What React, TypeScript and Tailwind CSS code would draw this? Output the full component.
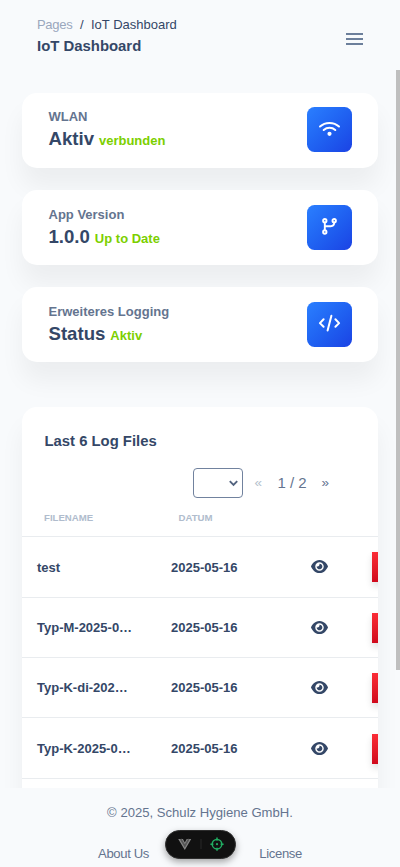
import type { ReactNode } from "react";
import { FaEye } from "react-icons/fa6";

const WifiIcon = () => (
  <svg width="23" height="23" viewBox="0 0 23 23" fill="none" stroke="white" strokeWidth="2" strokeLinecap="round">
    <path d="M2 8.5C7.2 3.7 15.8 3.7 21 8.5M5.7 12C9 9.1 14 9.1 17.3 12" />
    <circle cx="11.5" cy="15.8" r="2.1" fill="white" stroke="none" />
  </svg>
);

const BranchIcon = () => (
  <svg width="23" height="23" viewBox="0 0 23 23" fill="none" stroke="white" strokeWidth="1.9" strokeLinecap="round">
    <circle cx="6.8" cy="5.7" r="1.7" />
    <circle cx="6.8" cy="17" r="1.7" />
    <circle cx="16.2" cy="5.7" r="1.7" />
    <path d="M6.8 7.6v7.4M6.8 12.1c0-.7.6-.9 1.4-.9h4.5c2.2 0 3.5-1.2 3.5-3.6" />
  </svg>
);

const CodeIcon = () => (
  <svg width="23" height="23" viewBox="0 0 23 23" fill="none" stroke="white" strokeWidth="2" strokeLinecap="round" strokeLinejoin="round">
    <path d="M5.6 7.3 1.9 11.1l3.7 3.7M17.4 7.3l3.7 3.8-3.7 3.7M13.4 3.8 9.6 18.5" />
  </svg>
);

function StatCard({ label, value, note, icon }: { label: string; value: string; note: string; icon: ReactNode }) {
  return (
    <section className="flex h-[75px] items-start justify-between rounded-[15px] bg-white pt-[14.8px] pr-[26px] pl-[26.5px] shadow-[0_19px_25px_rgba(0,0,0,0.05)]">
      <div>
        <p className="text-[13px] leading-[20px] font-bold text-[#64748f]">{label}</p>
        <p className="text-[18.6px] leading-[24px] font-bold">
          {value}
          <span className="ml-[5px] text-[13px] text-[#7ccf00]">{note}</span>
        </p>
      </div>
      <div className="flex size-[45px] items-center justify-center rounded-[7.5px] bg-linear-to-br from-[#2b7fff] to-[#1c42e4] pb-[1px]">
        {icon}
      </div>
    </section>
  );
}

const files = ["test", "Typ-M-2025-0…", "Typ-K-di-202…", "Typ-K-2025-0…"];

export default function App() {
  return (
    <div className="relative flex h-[867px] w-[400px] flex-col overflow-hidden bg-[#f8fafc] font-['Liberation_Sans',Arial,sans-serif] text-[#344767]">
      <header className="flex h-[92.5px] shrink-0 items-start justify-between pt-[15px] pr-[37px] pl-[37px]">
        <div>
          <nav className="flex text-[13px] leading-[20px]">
            <span className="w-[43px] tracking-[-0.3px] text-[#9aa7bd]">Pages</span>
            <span className="w-[11px]">/</span>
            <span>IoT Dashboard</span>
          </nav>
          <h1 className="text-[14.9px] leading-[22px] font-bold">IoT Dashboard</h1>
        </div>
        <button aria-label="Menu" className="mt-[18px] flex w-[17px] flex-col gap-[3px]">
          <span className="h-[2px] bg-[#6c7f9b]" />
          <span className="h-[2px] bg-[#6c7f9b]" />
          <span className="h-[2px] bg-[#6c7f9b]" />
        </button>
      </header>

      <main className="flex h-[695.5px] shrink-0 flex-col overflow-hidden px-[22px]">
        <div className="flex shrink-0 flex-col gap-[22.3px]">
          <StatCard label="WLAN" value="Aktiv" note="verbunden" icon={<WifiIcon />} />
          <StatCard label="App Version" value="1.0.0" note="Up to Date" icon={<BranchIcon />} />
          <StatCard label="Erweiteres Logging" value="Status" note="Aktiv" icon={<CodeIcon />} />
        </div>

        <section className="mt-[44.5px] h-[500px] shrink-0 overflow-hidden rounded-[15px] bg-white shadow-[0_19px_25px_rgba(0,0,0,0.05)]">
          <h2 className="pt-[23.4px] pl-[22.5px] text-[14.85px] leading-[22px] font-bold">Last 6 Log Files</h2>
          <div className="mt-[16.1px] flex h-[30px] items-center pl-[170.5px] text-[15px] text-[#64748f]">
            <div className="flex h-[30px] w-[50.5px] shrink-0 items-center justify-end rounded-[4px] border border-[#71829e] pr-[4px]">
              <svg width="9" height="7" viewBox="0 0 9 7" fill="none" stroke="#52637f" strokeWidth="1.9">
                <path d="M.8 1.2 4.5 4.9 8.2 1.2" />
              </svg>
            </div>
            <span className="ml-[11.5px] w-[23px] text-[13.5px] text-[#b5bfcd]">«</span>
            <span className="w-[44px]">1 / 2</span>
            <span className="text-[13.5px]">»</span>
          </div>
          <div className="flex h-[39.2px] items-center border-b border-[#e9ecef] pt-[2px] text-[9.65px] font-bold text-[#b0bccd]">
            <span className="w-[134px] pl-[22px]">FILENAME</span>
            <span className="pl-[22.5px]">DATUM</span>
          </div>
          {files.map((name) => (
            <div key={name} className="flex h-[60.4px] items-center border-b border-[#e9ecef] pt-[1px] text-[13px] font-bold">
              <span className="w-[134px] shrink-0 pl-[15px]">{name}</span>
              <span className="w-[140.5px] shrink-0 pl-[15px]">2025-05-16</span>
              <FaEye size={17} className="mb-[1px] ml-[14.5px] shrink-0" />
              <span className="ml-[44px] h-[30px] w-[60px] shrink-0 bg-linear-to-b from-[#fb2c36] to-[#d0091c] shadow-[0_4px_7px_rgba(0,0,0,0.12)]" />
            </div>
          ))}
        </section>
      </main>

      <footer className="flex-1 pt-[15px] text-[13.1px] text-[#64748f]">
        <p className="text-center leading-[20px]">© 2025, Schulz Hygiene GmbH.</p>
        <div className="mt-[21px] flex justify-between pr-[98px] pl-[98px] leading-[20px] tracking-[-0.35px]">
          <span>About Us</span>
          <span>License</span>
        </div>
      </footer>

      <div className="absolute top-[830px] left-[164.5px] flex h-[28.5px] w-[71px] items-center justify-center rounded-full border border-[#2c2c2c] bg-[#111] shadow-[0_3px_7px_rgba(0,0,0,0.35)]">
        <svg width="69" height="26" viewBox="0 0 69 26" fill="none">
          <path d="M12.2 8h4.7l1.9 3.5L20.7 8h4.5L18.8 19Z" fill="#868686" />
          <path d="m14.7 8 4.1 7 4-7" stroke="#555" strokeWidth="1.7" />
          <path d="M35 8v10" stroke="#292929" />
          <g stroke="#21ad62" strokeWidth="1.5">
            <circle cx="51" cy="13.2" r="4.8" />
            <path d="M51 6.6v3M51 16.8v3M44.4 13.2h3M54.6 13.2h3" />
          </g>
          <circle cx="51" cy="13.2" r="1.1" fill="#21ad62" />
        </svg>
      </div>
      <div className="absolute top-[70px] right-0 h-[600px] w-[4px] bg-[#bfbfbf]" />
    </div>
  );
}
